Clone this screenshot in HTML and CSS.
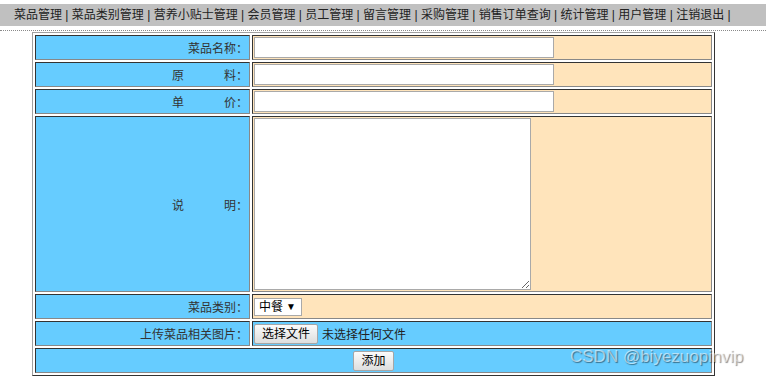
FILE: index.html
```html
<!DOCTYPE html>
<html lang="zh-CN">
<head>
<meta charset="utf-8">
<title>添加菜品</title>
<link rel="stylesheet" href="styles.css">
</head>
<body>
<div class="nav"><a href="#">菜品管理</a> | <a href="#">菜品类别管理</a> | <a href="#">营养小贴士管理</a> | <a href="#">会员管理</a> | <a href="#">员工管理</a> | <a href="#">留言管理</a> | <a href="#">采购管理</a> | <a href="#">销售订单查询</a> | <a href="#">统计管理</a> | <a href="#">用户管理</a> | <a href="#">注销退出</a> |</div>
<div class="rule"></div>
<form class="form">
  <table class="grid">
    <tr class="row">
      <td class="lbl">菜品名称：</td>
      <td class="val"><input type="text" class="txt"></td>
    </tr>
    <tr class="row">
      <td class="lbl">原<span class="gap"></span>料：</td>
      <td class="val"><input type="text" class="txt"></td>
    </tr>
    <tr class="row">
      <td class="lbl">单<span class="gap"></span>价：</td>
      <td class="val"><input type="text" class="txt"></td>
    </tr>
    <tr class="row-tall">
      <td class="lbl">说<span class="gap"></span>明：</td>
      <td class="val"><textarea class="area"></textarea></td>
    </tr>
    <tr class="row">
      <td class="lbl">菜品类别：</td>
      <td class="val"><span class="sel-wrap"><select class="sel"><option>中餐</option><option>西餐</option></select></span></td>
    </tr>
    <tr class="row">
      <td class="lbl">上传菜品相关图片：</td>
      <td class="val val-blue"><span class="file"><button type="button" class="btn">选择文件</button><span class="file-name">未选择任何文件</span></span></td>
    </tr>
    <tr class="row">
      <td class="foot" colspan="2"><button type="button" class="btn">添加</button></td>
    </tr>
  </table>
</form>
<div class="watermark">CSDN @biyezuopinvip</div>
</body>
</html>
```

FILE: styles.css
```css
html, body {
  margin: 0;
  padding: 0;
  background: #fff;
}

body {
  font-family: "Liberation Sans", "Noto Sans CJK SC", sans-serif;
  font-size: 12px;
  color: #222;
  width: 766px;
  height: 377px;
  overflow: hidden;
  position: relative;
}

.nav {
  margin-top: 4px;
  height: 22px;
  line-height: 22px;
  background: #c0c0c0;
  padding-left: 14px;
  white-space: nowrap;
  color: #222;
}

.nav a {
  color: #222;
  text-decoration: none;
}

.rule {
  margin-top: 4px;
  border-top: 1px dotted #8a8a8a;
}

.form {
  margin: 1px 0 0 32px;
}

.grid {
  border-collapse: separate;
  border-spacing: 2px;
  border: 1px solid;
  border-color: #a0a0a0 #333 #333 #a0a0a0;
  width: 683px;
}

.grid td {
  border: 1px solid;
  border-color: #333 #888 #888 #333;
  padding: 1px;
  vertical-align: middle;
}

.row {
  height: 25px;
}

.row-tall {
  height: 176px;
}

.lbl {
  width: 211px;
  background: #66ccff;
  text-align: right;
  color: #333;
  white-space: nowrap;
}

.gap {
  display: inline-block;
  width: 40px;
}

.val {
  background: #ffe4bb;
}

.val-blue {
  background: #66ccff;
}

.foot {
  background: #66ccff;
  text-align: center;
}

.txt {
  display: block;
  box-sizing: border-box;
  width: 300px;
  height: 21px;
  margin: 0;
  padding: 0 2px;
  border: 1px solid #a9a9a9;
  background: #fff;
  font: inherit;
}

.area {
  display: block;
  box-sizing: border-box;
  width: 277px;
  height: 172px;
  margin: 0;
  padding: 2px;
  border: 1px solid #a9a9a9;
  background: #fff;
  font: inherit;
}

.sel-wrap {
  position: relative;
  display: inline-block;
  vertical-align: middle;
}

.sel-wrap::after {
  content: "▼";
  position: absolute;
  right: 6px;
  top: 4px;
  font-size: 10px;
  line-height: 10px;
  color: #000;
  pointer-events: none;
}

.sel {
  -webkit-appearance: none;
  appearance: none;
  box-sizing: border-box;
  width: 48px;
  height: 18px;
  margin: 0;
  padding: 0 0 0 4px;
  border: 1px solid #a9a9a9;
  border-radius: 0;
  background: #fff;
  font: inherit;
  color: #000;
  display: block;
}

.file {
  display: flex;
  align-items: center;
  gap: 4px;
}

.btn {
  box-sizing: border-box;
  height: 20px;
  margin: 0;
  padding: 0 7px;
  border: 1px solid #a6a6a6;
  border-radius: 2px;
  background: linear-gradient(#fbfbfb, #dedede);
  font: inherit;
  color: #000;
  line-height: 18px;
  vertical-align: middle;
}

.file-name {
  color: #222;
}

.watermark {
  position: absolute;
  left: 570px;
  top: 346px;
  font-family: "Liberation Sans", sans-serif;
  font-size: 17px;
  line-height: 22px;
  color: rgba(255, 255, 255, 0.55);
  text-shadow: 1px 1px 1px rgba(0, 0, 0, 0.45);
  white-space: nowrap;
  pointer-events: none;
}
```
